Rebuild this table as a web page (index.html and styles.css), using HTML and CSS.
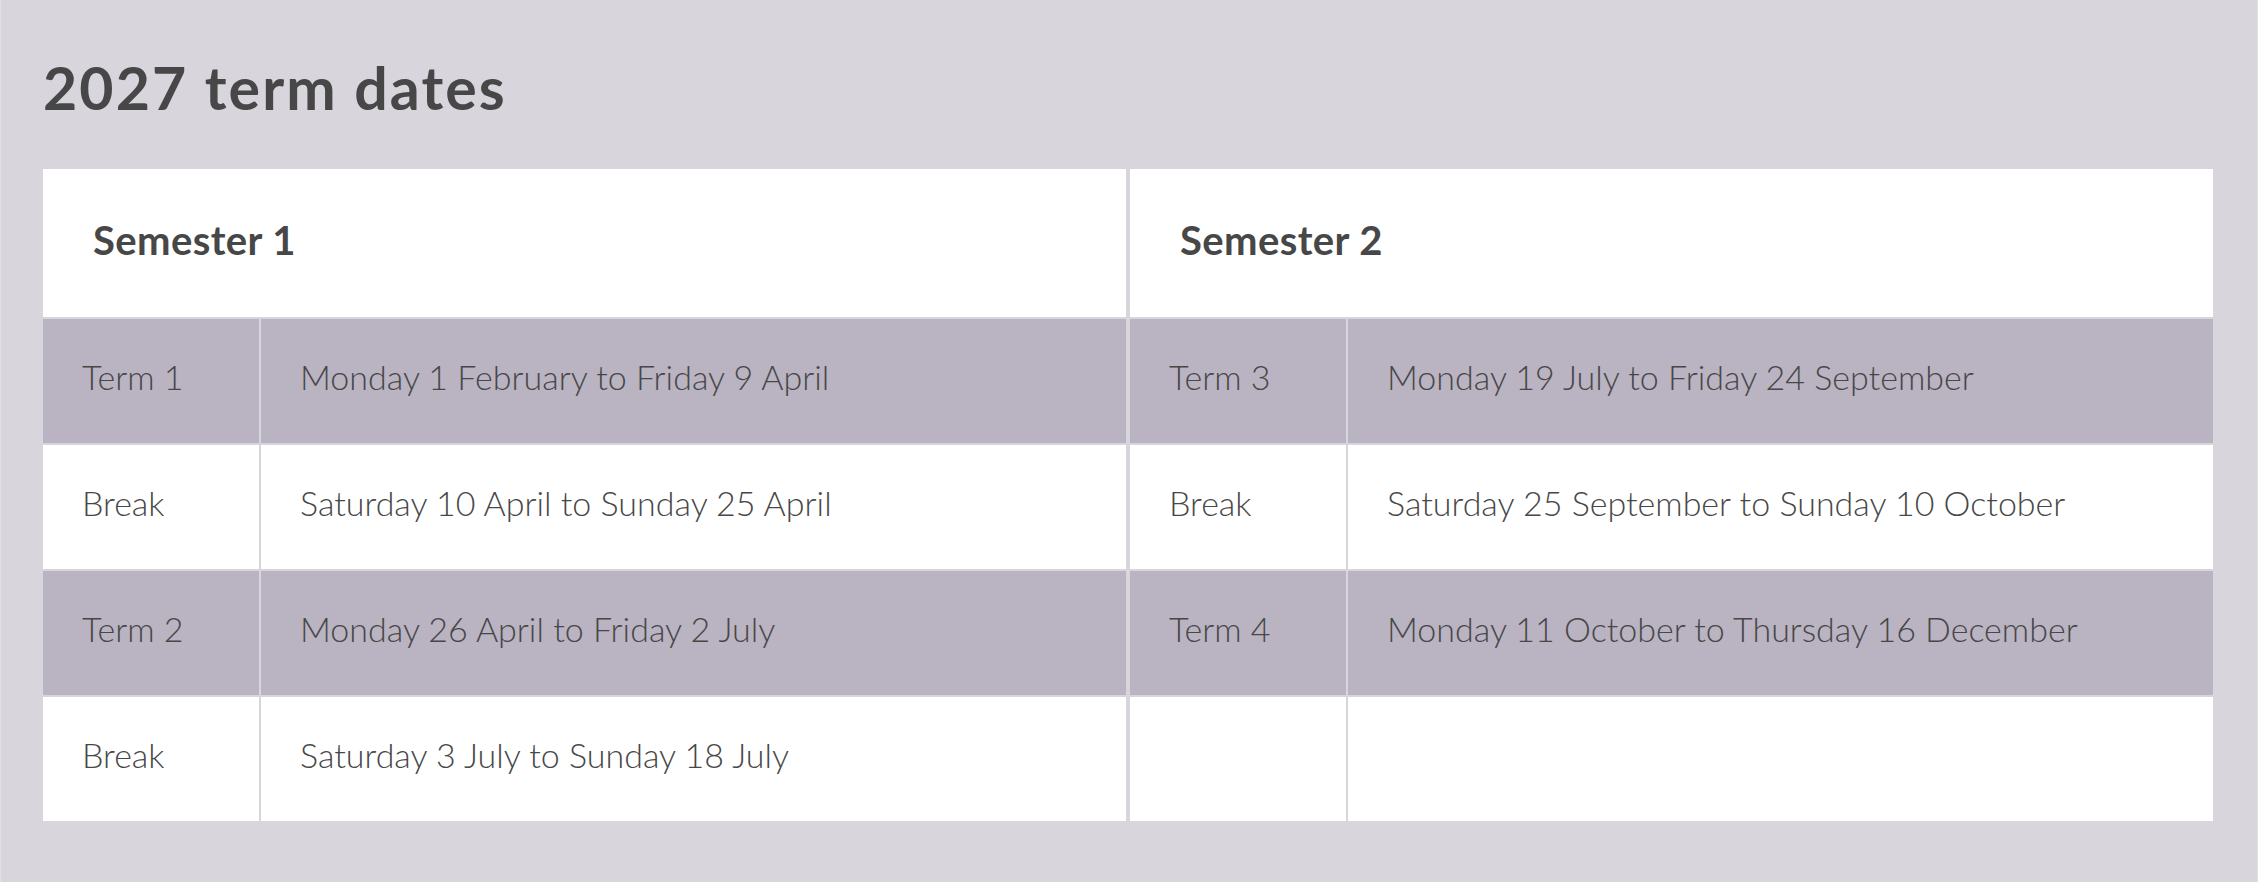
FILE: index.html
```html
<!DOCTYPE html>
<html lang="en">
<head>
<meta charset="utf-8">
<title>2027 term dates</title>
<link rel="stylesheet" href="styles.css">
</head>
<body>
<main class="page">
  <h1 class="title">2027 term dates</h1>
  <div class="semesters">
    <section class="semester">
      <h2 class="sem-head">Semester 1</h2>
      <div class="cell shaded label">Term 1</div>
      <div class="cell shaded">Monday 1 February to Friday 9 April</div>
      <div class="cell label">Break</div>
      <div class="cell">Saturday 10 April to Sunday 25 April</div>
      <div class="cell shaded label">Term 2</div>
      <div class="cell shaded">Monday 26 April to Friday 2 July</div>
      <div class="cell label">Break</div>
      <div class="cell">Saturday 3 July to Sunday 18 July</div>
    </section>
    <section class="semester">
      <h2 class="sem-head">Semester 2</h2>
      <div class="cell shaded label">Term 3</div>
      <div class="cell shaded">Monday 19 July to Friday 24 September</div>
      <div class="cell label">Break</div>
      <div class="cell">Saturday 25 September to Sunday 10 October</div>
      <div class="cell shaded label">Term 4</div>
      <div class="cell shaded">Monday 11 October to Thursday 16 December</div>
      <div class="cell label"></div>
      <div class="cell"></div>
    </section>
  </div>
</main>
</body>
</html>
```
FILE: styles.css
```css
html, body {
  margin: 0;
  padding: 0;
  background: #d8d5dd;
}
body {
  font-family: Lato, "Open Sans", sans-serif;
  color: #474747;
}
.page {
  height: 882px;
  box-sizing: border-box;
  padding: 0 44px 0 42px;
  border-left: 1px solid #e2e0e5;
  border-right: 1px solid #e2e0e5;
}
.title {
  margin: 0;
  padding-top: 58px;
  height: 169px;
  box-sizing: border-box;
  font-size: 59px;
  font-weight: 700;
  line-height: 59px;
  letter-spacing: 2.1px;
}
.semesters {
  display: flex;
  gap: 4px;
}
.semester {
  flex: 1;
  display: grid;
  grid-template-columns: 216px 1fr;
  grid-template-rows: 148px repeat(4, 124px);
  gap: 2px;
}
.sem-head {
  grid-column: 1 / -1;
  margin: 0;
  background: #fff;
  display: flex;
  align-items: center;
  padding-left: 50px;
  padding-bottom: 6px;
  font-size: 40px;
  font-weight: 700;
  letter-spacing: 0.4px;
}
.cell {
  background: #fff;
  display: flex;
  align-items: center;
  padding-left: 39px;
  font-size: 34px;
  font-weight: 300;
  padding-bottom: 10px;
}
.cell.shaded {
  background: #b9b3c2;
}
```
